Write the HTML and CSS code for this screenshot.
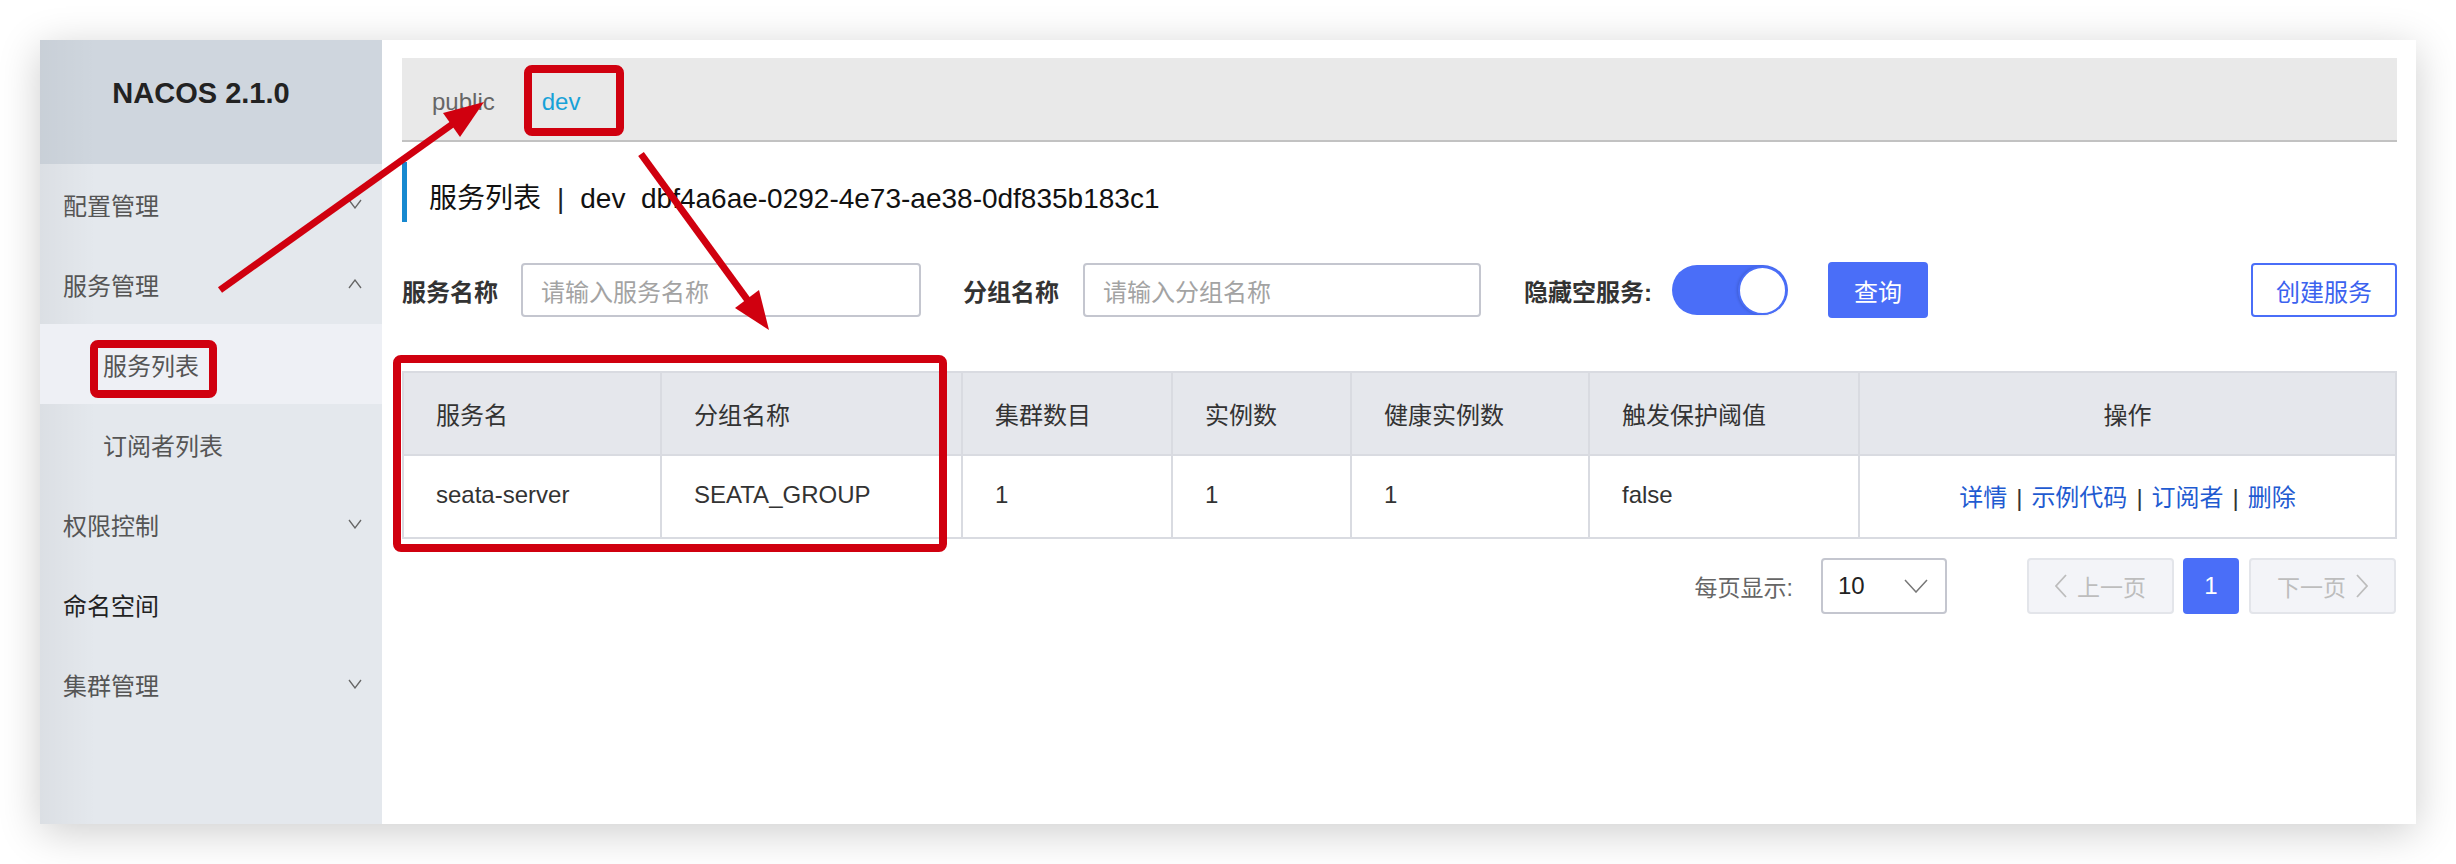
FILE: index.html
```html
<!DOCTYPE html>
<html lang="zh-CN">
<head>
<meta charset="utf-8">
<title>Nacos 服务列表</title>
<link rel="stylesheet" href="styles.css">
</head>
<body>
<div class="page">
  <div class="card">
    <aside class="sidebar">
      <div class="logo">NACOS 2.1.0</div>
      <nav class="menu">
        <div class="item"><span>配置管理</span><svg class="chev" viewBox="0 0 14 10"><polyline points="1,1 7,9 13,1"/></svg></div>
        <div class="item"><span>服务管理</span><svg class="chev" viewBox="0 0 14 10"><polyline points="1,9 7,1 13,9"/></svg></div>
        <div class="sub active"><span>服务列表</span></div>
        <div class="sub"><span>订阅者列表</span></div>
        <div class="item"><span>权限控制</span><svg class="chev" viewBox="0 0 14 10"><polyline points="1,1 7,9 13,1"/></svg></div>
        <div class="item dark"><span>命名空间</span></div>
        <div class="item"><span>集群管理</span><svg class="chev" viewBox="0 0 14 10"><polyline points="1,1 7,9 13,1"/></svg></div>
      </nav>
    </aside>
    <main class="main">
      <div class="tabs">
        <span class="tab">public</span>
        <span class="tab active">dev</span>
      </div>
      <h1 class="title">服务列表<span class="sep">|</span>dev&nbsp;&nbsp;dbf4a6ae-0292-4e73-ae38-0df835b183c1</h1>
      <div class="search">
        <label class="lbl">服务名称</label>
        <div class="input in1">请输入服务名称</div>
        <label class="lbl l2">分组名称</label>
        <div class="input in2">请输入分组名称</div>
        <label class="lbl l3">隐藏空服务:</label>
        <div class="switch"><span class="knob"></span></div>
        <button class="btn primary">查询</button>
        <button class="btn outline">创建服务</button>
      </div>
      <table class="grid">
        <colgroup>
          <col class="c1"><col class="c2"><col class="c3"><col class="c4"><col class="c5"><col class="c6"><col class="c7">
        </colgroup>
        <thead>
          <tr><th>服务名</th><th>分组名称</th><th>集群数目</th><th>实例数</th><th>健康实例数</th><th>触发保护阈值</th><th class="center">操作</th></tr>
        </thead>
        <tbody>
          <tr><td>seata-server</td><td>SEATA_GROUP</td><td>1</td><td>1</td><td>1</td><td>false</td>
            <td class="center"><a>详情</a><span class="bar">|</span><a>示例代码</a><span class="bar">|</span><a>订阅者</a><span class="bar">|</span><a>删除</a></td></tr>
        </tbody>
      </table>
      <div class="pager">
        <span class="per">每页显示:</span>
        <div class="select"><span>10</span><svg class="selchev" viewBox="0 0 24 14"><polyline points="1,1 12,13 23,1"/></svg></div>
        <div class="pbtn disabled prev"><svg class="pchev" viewBox="0 0 12 24"><polyline points="11,1 1,12 11,23"/></svg><span>上一页</span></div>
        <div class="pbtn current">1</div>
        <div class="pbtn disabled"><span>下一页</span><svg class="pchev" viewBox="0 0 12 24"><polyline points="1,1 11,12 1,23"/></svg></div>
      </div>
    </main>
  </div>
  <svg class="annot" viewBox="0 0 2456 864">
    <rect x="528" y="69" width="92" height="63" rx="4"/>
    <rect x="94" y="344" width="119" height="50" rx="4"/>
    <rect x="397" y="359" width="546" height="189" rx="4"/>
    <line x1="220" y1="290" x2="454" y2="123"/>
    <polygon points="484,102 460,137 443,113"/>
    <line x1="641" y1="154" x2="749" y2="302"/>
    <polygon points="769,330 735,308 759,290"/>
  </svg>
</div>
</body>
</html>
```

FILE: styles.css
```css
* { box-sizing: border-box; margin: 0; padding: 0; }
html, body { background: #ffffff; }
body {
  font-family: "Liberation Sans", "Noto Sans CJK SC", sans-serif;
  font-size: 24px;
  color: #333;
}
.page {
  position: relative;
  width: 2456px;
  height: 864px;
  padding: 40px;
}
.card {
  display: flex;
  height: 784px;
  background: #fff;
  box-shadow: 0 8px 40px rgba(0, 0, 0, 0.2);
}

/* sidebar */
.sidebar {
  width: 342px;
  flex: none;
  background: linear-gradient(to right, rgba(0, 0, 0, 0.04), rgba(0, 0, 0, 0) 56px), #e4e8ed;
}
.logo {
  height: 124px;
  padding: 39px 20px 0 0;
  text-align: center;
  font-size: 29px;
  line-height: 29px;
  font-weight: bold;
  color: #222;
  background: linear-gradient(to right, rgba(0, 0, 0, 0.03), rgba(0, 0, 0, 0) 56px), #cfd6de;
}
.menu { display: flex; flex-direction: column; }
.item, .sub {
  height: 80px;
  display: flex;
  align-items: center;
  justify-content: space-between;
  padding: 0 20px 0 23px;
  color: #555;
  font-size: 24px;
}
.sub { padding-left: 63px; }
.sub.active { background: #eef0f5; }
.item.dark { color: #222; }
.chev {
  width: 14px;
  height: 10px;
  fill: none;
  stroke: #666;
  stroke-width: 1.3;
}

/* main */
.main {
  flex: 1;
  padding: 18px 20px 0 20px;
}
.tabs {
  height: 84px;
  background: #e9e9e9;
  border-bottom: 2px solid #c2c2c2;
  display: flex;
  align-items: center;
  gap: 47px;
  padding: 6px 0 0 30px;
  font-size: 24px;
}
.tab { color: #666; }
.tab.active { color: #17a2d8; }

.title {
  margin-top: 20px;
  height: 60px;
  border-left: 5px solid #1789d0;
  padding: 14px 0 0 22px;
  line-height: 46px;
  font-size: 28px;
  font-weight: normal;
  color: #111;
  white-space: nowrap;
}
.title .sep { margin: 0 16px; color: #222; }

.search {
  margin-top: 40px;
  height: 56px;
  display: flex;
  align-items: center;
}
.lbl {
  font-weight: bold;
  color: #333;
  font-size: 24px;
}
.l2 { margin-left: 42px; }
.l3 { margin-left: 43px; }
.input {
  height: 54px;
  border: 2px solid #c4c6cf;
  border-radius: 4px;
  color: #a3a3a3;
  font-size: 24px;
  display: flex;
  align-items: center;
  padding-left: 18px;
  margin-left: 23px;
}
.in1 { width: 400px; }
.in2 { width: 398px; margin-left: 24px; }
.switch {
  margin-left: 20px;
  width: 116px;
  height: 50px;
  border-radius: 25px;
  background: #4a6ef8;
  display: flex;
  justify-content: flex-end;
  align-items: center;
  padding-right: 1px;
}
.knob {
  width: 49px;
  height: 49px;
  border-radius: 50%;
  background: #fff;
  border: 2px solid #4a6ef8;
  box-shadow: -1px 0 3px rgba(0, 0, 0, 0.15);
}
.btn {
  font-family: inherit;
  font-size: 24px;
  border-radius: 4px;
  cursor: pointer;
}
.btn.primary {
  margin-left: 40px;
  width: 100px;
  height: 56px;
  background: #4a6ef8;
  border: none;
  color: #fff;
}
.btn.outline {
  margin-left: auto;
  width: 146px;
  height: 54px;
  background: #fff;
  border: 2px solid #4a6ef8;
  color: #3b62ef;
}

/* table */
.grid {
  margin-top: 53px;
  width: 1993px;
  table-layout: fixed;
  border-collapse: collapse;
  font-size: 24px;
}
.c1 { width: 258px; }
.c2 { width: 301px; }
.c3 { width: 210px; }
.c4 { width: 179px; }
.c5 { width: 238px; }
.c6 { width: 270px; }
.c7 { width: 537px; }
.grid th, .grid td {
  height: 83px;
  border: 2px solid #d9dbe1;
  padding: 0 0 0 32px;
  text-align: left;
  font-weight: normal;
  color: #333;
  white-space: nowrap;
}
.grid th { background: #e5e7ec; }
.grid td { padding-bottom: 3px; }
.grid .center { text-align: center; padding-left: 0; }
.grid a { color: #1f5bd1; }
.grid .bar { margin: 0 9px; color: #333; }

/* pager */
.pager {
  margin-top: 19px;
  height: 56px;
  display: flex;
  align-items: center;
  justify-content: flex-end;
  padding-right: 1px;
}
.per { color: #666; font-size: 23px; }
.select {
  margin-left: 28px;
  width: 126px;
  height: 56px;
  border: 2px solid #c4c6cf;
  border-radius: 4px;
  display: flex;
  align-items: center;
  justify-content: space-between;
  padding: 0 17px 0 15px;
  color: #222;
  font-size: 24px;
}
.selchev { width: 24px; height: 14px; fill: none; stroke: #777; stroke-width: 1.5; }
.pbtn {
  height: 56px;
  border-radius: 4px;
  display: flex;
  align-items: center;
  justify-content: center;
  gap: 10px;
  font-size: 23px;
}
.pbtn.disabled {
  width: 147px;
  background: #f3f4f8;
  border: 2px solid #e3e5ea;
  color: #bdbdbd;
}
.pbtn.prev { margin-left: 80px; }
.pbtn.current {
  width: 56px;
  margin: 0 10px 0 9px;
  background: #4a6ef8;
  color: #fff;
  font-size: 24px;
}
.pchev { width: 12px; height: 24px; fill: none; stroke: #bdbdbd; stroke-width: 1.8; }

/* annotations */
.annot {
  position: absolute;
  left: 0;
  top: 0;
  width: 2456px;
  height: 864px;
  pointer-events: none;
}
.annot rect { fill: none; stroke: #d0000f; stroke-width: 8; }
.annot line { stroke: #d0000f; stroke-width: 7; }
.annot polygon { fill: #d0000f; }
```
